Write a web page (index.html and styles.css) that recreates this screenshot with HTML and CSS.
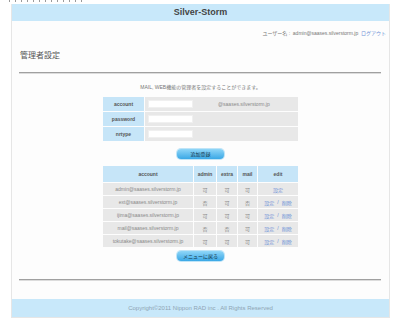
FILE: index.html
```html
<!DOCTYPE html>
<html lang="ja">
<head>
<meta charset="utf-8">
<title>Silver-Storm</title>
<link rel="stylesheet" href="styles.css">
</head>
<body>
<div class="topstrip"></div>
<div class="page">
  <div class="header">Silver-Storm</div>
  <div class="userline">ユーザー名 :&nbsp; admin@saases.silverstorm.jp&nbsp; <a class="link" href="#">ログアウト</a></div>
  <div class="title">管理者設定</div>
  <div class="rule"></div>
  <div class="desc">MAIL, WEB機能の管理者を設定することができます。</div>
  <div class="form">
    <div class="label">account</div>
    <div class="value"><span class="input"></span><span class="domain">@saases.silverstorm.jp</span></div>
    <div class="label">password</div>
    <div class="value"><span class="input"></span></div>
    <div class="label">nrtype</div>
    <div class="value"><span class="input"></span></div>
  </div>
  <div class="btnrow first"><span class="btn">追加登録</span></div>
  <div class="list">
    <div class="th">account</div><div class="th">admin</div><div class="th">extra</div><div class="th">mail</div><div class="th">edit</div>
    <div class="td">admin@saases.silverstorm.jp</div><div class="td">可</div><div class="td">可</div><div class="td">可</div><div class="td"><a class="link" href="#">設定</a></div>
    <div class="td">ext@saases.silverstorm.jp</div><div class="td">否</div><div class="td">可</div><div class="td">否</div><div class="td"><a class="link" href="#">設定</a><span class="sep">/</span><a class="link" href="#">削除</a></div>
    <div class="td">ijima@saases.silverstorm.jp</div><div class="td">可</div><div class="td">可</div><div class="td">可</div><div class="td"><a class="link" href="#">設定</a><span class="sep">/</span><a class="link" href="#">削除</a></div>
    <div class="td">mail@saases.silverstorm.jp</div><div class="td">否</div><div class="td">否</div><div class="td">可</div><div class="td"><a class="link" href="#">設定</a><span class="sep">/</span><a class="link" href="#">削除</a></div>
    <div class="td">tokutake@saases.silverstorm.jp</div><div class="td">可</div><div class="td">可</div><div class="td">可</div><div class="td"><a class="link" href="#">設定</a><span class="sep">/</span><a class="link" href="#">削除</a></div>
  </div>
  <div class="btnrow second"><span class="btn">メニューに戻る</span></div>
  <div class="rule lower"></div>
  <div class="footer">Copyright©2011 Nippon RAD inc . All Rights Reserved</div>
</div>
</body>
</html>
```
FILE: styles.css
```css
html, body {
  margin: 0;
  padding: 0;
  background: #ffffff;
}
body {
  font-family: "Liberation Sans", "Noto Sans CJK JP", sans-serif;
  color: #666;
  width: 400px;
  height: 330px;
  overflow: hidden;
}
.topstrip {
  height: 2px;
  width: 76px;
  margin-left: 9px;
  margin-bottom: 2px;
  background: repeating-linear-gradient(90deg, #9a9a9a 0 1px, transparent 1px 6px);
}
.page {
  width: 377px;
  margin-left: 11px;
  border: 1px solid #e6e6e6;
  border-top: none;
  background: #fdfdfd;
}
.header {
  height: 17px;
  line-height: 17px;
  background: #c8e8fa;
  text-align: center;
  font-size: 9px;
  font-weight: bold;
  color: #444;
}
.userline {
  height: 24px;
  line-height: 24px;
  text-align: right;
  padding-right: 3px;
  font-size: 5px;
  color: #777;
}
.link {
  color: #6b8fd6;
  text-decoration: none;
}
.title {
  height: 21px;
  line-height: 21px;
  padding-left: 8px;
  font-size: 8px;
  color: #555;
}
.rule {
  height: 1px;
  margin: 6px 8px 0 7px;
  background: #a0a0a0;
  box-shadow: 0 1px 0 #dcdcdc;
}
.desc {
  height: 16px;
  line-height: 16px;
  margin-top: 6px;
  text-align: center;
  font-size: 5px;
  color: #777;
}
.form {
  display: grid;
  grid-template-columns: 41px 153px;
  grid-auto-rows: 14px;
  gap: 1px;
  width: 195px;
  margin: 2px auto 0;
}
.label {
  background: #c6e5f8;
  font-size: 5px;
  font-weight: bold;
  color: #555;
  display: flex;
  align-items: center;
  justify-content: center;
}
.value {
  background: #e8e8e8;
  display: flex;
  align-items: center;
  padding-left: 3px;
}
.input {
  display: block;
  width: 45px;
  height: 8px;
  background: #ffffff;
  box-shadow: inset 0 0 0 1px #f0f0f0;
}
.domain {
  font-size: 5px;
  color: #888;
  margin-left: 25px;
}
.btnrow {
  display: flex;
  justify-content: center;
}
.btnrow.first {
  margin-top: 8px;
}
.btnrow.second {
  margin-top: 4px;
}
.btn {
  width: 47px;
  height: 10px;
  line-height: 10px;
  border-radius: 4px;
  background: linear-gradient(#8fd6f8, #3aa8e6);
  box-shadow: 0 0 0 1px #bfe4f7;
  text-align: center;
  font-size: 5px;
  color: #134;
}
.list {
  display: grid;
  grid-template-columns: 90px 22px 20px 19px 40px;
  grid-template-rows: 16px;
  grid-auto-rows: 12px;
  gap: 1px;
  width: 195px;
  margin: 7px auto 0;
}
.th {
  background: #c6e5f8;
  font-size: 5px;
  font-weight: bold;
  color: #555;
  display: flex;
  align-items: center;
  justify-content: center;
}
.td {
  background: #e8e8e8;
  font-size: 5px;
  color: #888;
  display: flex;
  align-items: center;
  justify-content: center;
}
.sep {
  color: #6b8fd6;
  padding: 0 3px;
}
.rule.lower {
  margin-top: 18px;
}
.footer {
  height: 18px;
  line-height: 18px;
  margin-top: 19px;
  background: #c8e8fa;
  text-align: center;
  font-size: 6px;
  color: #8ea4b4;
}
```
